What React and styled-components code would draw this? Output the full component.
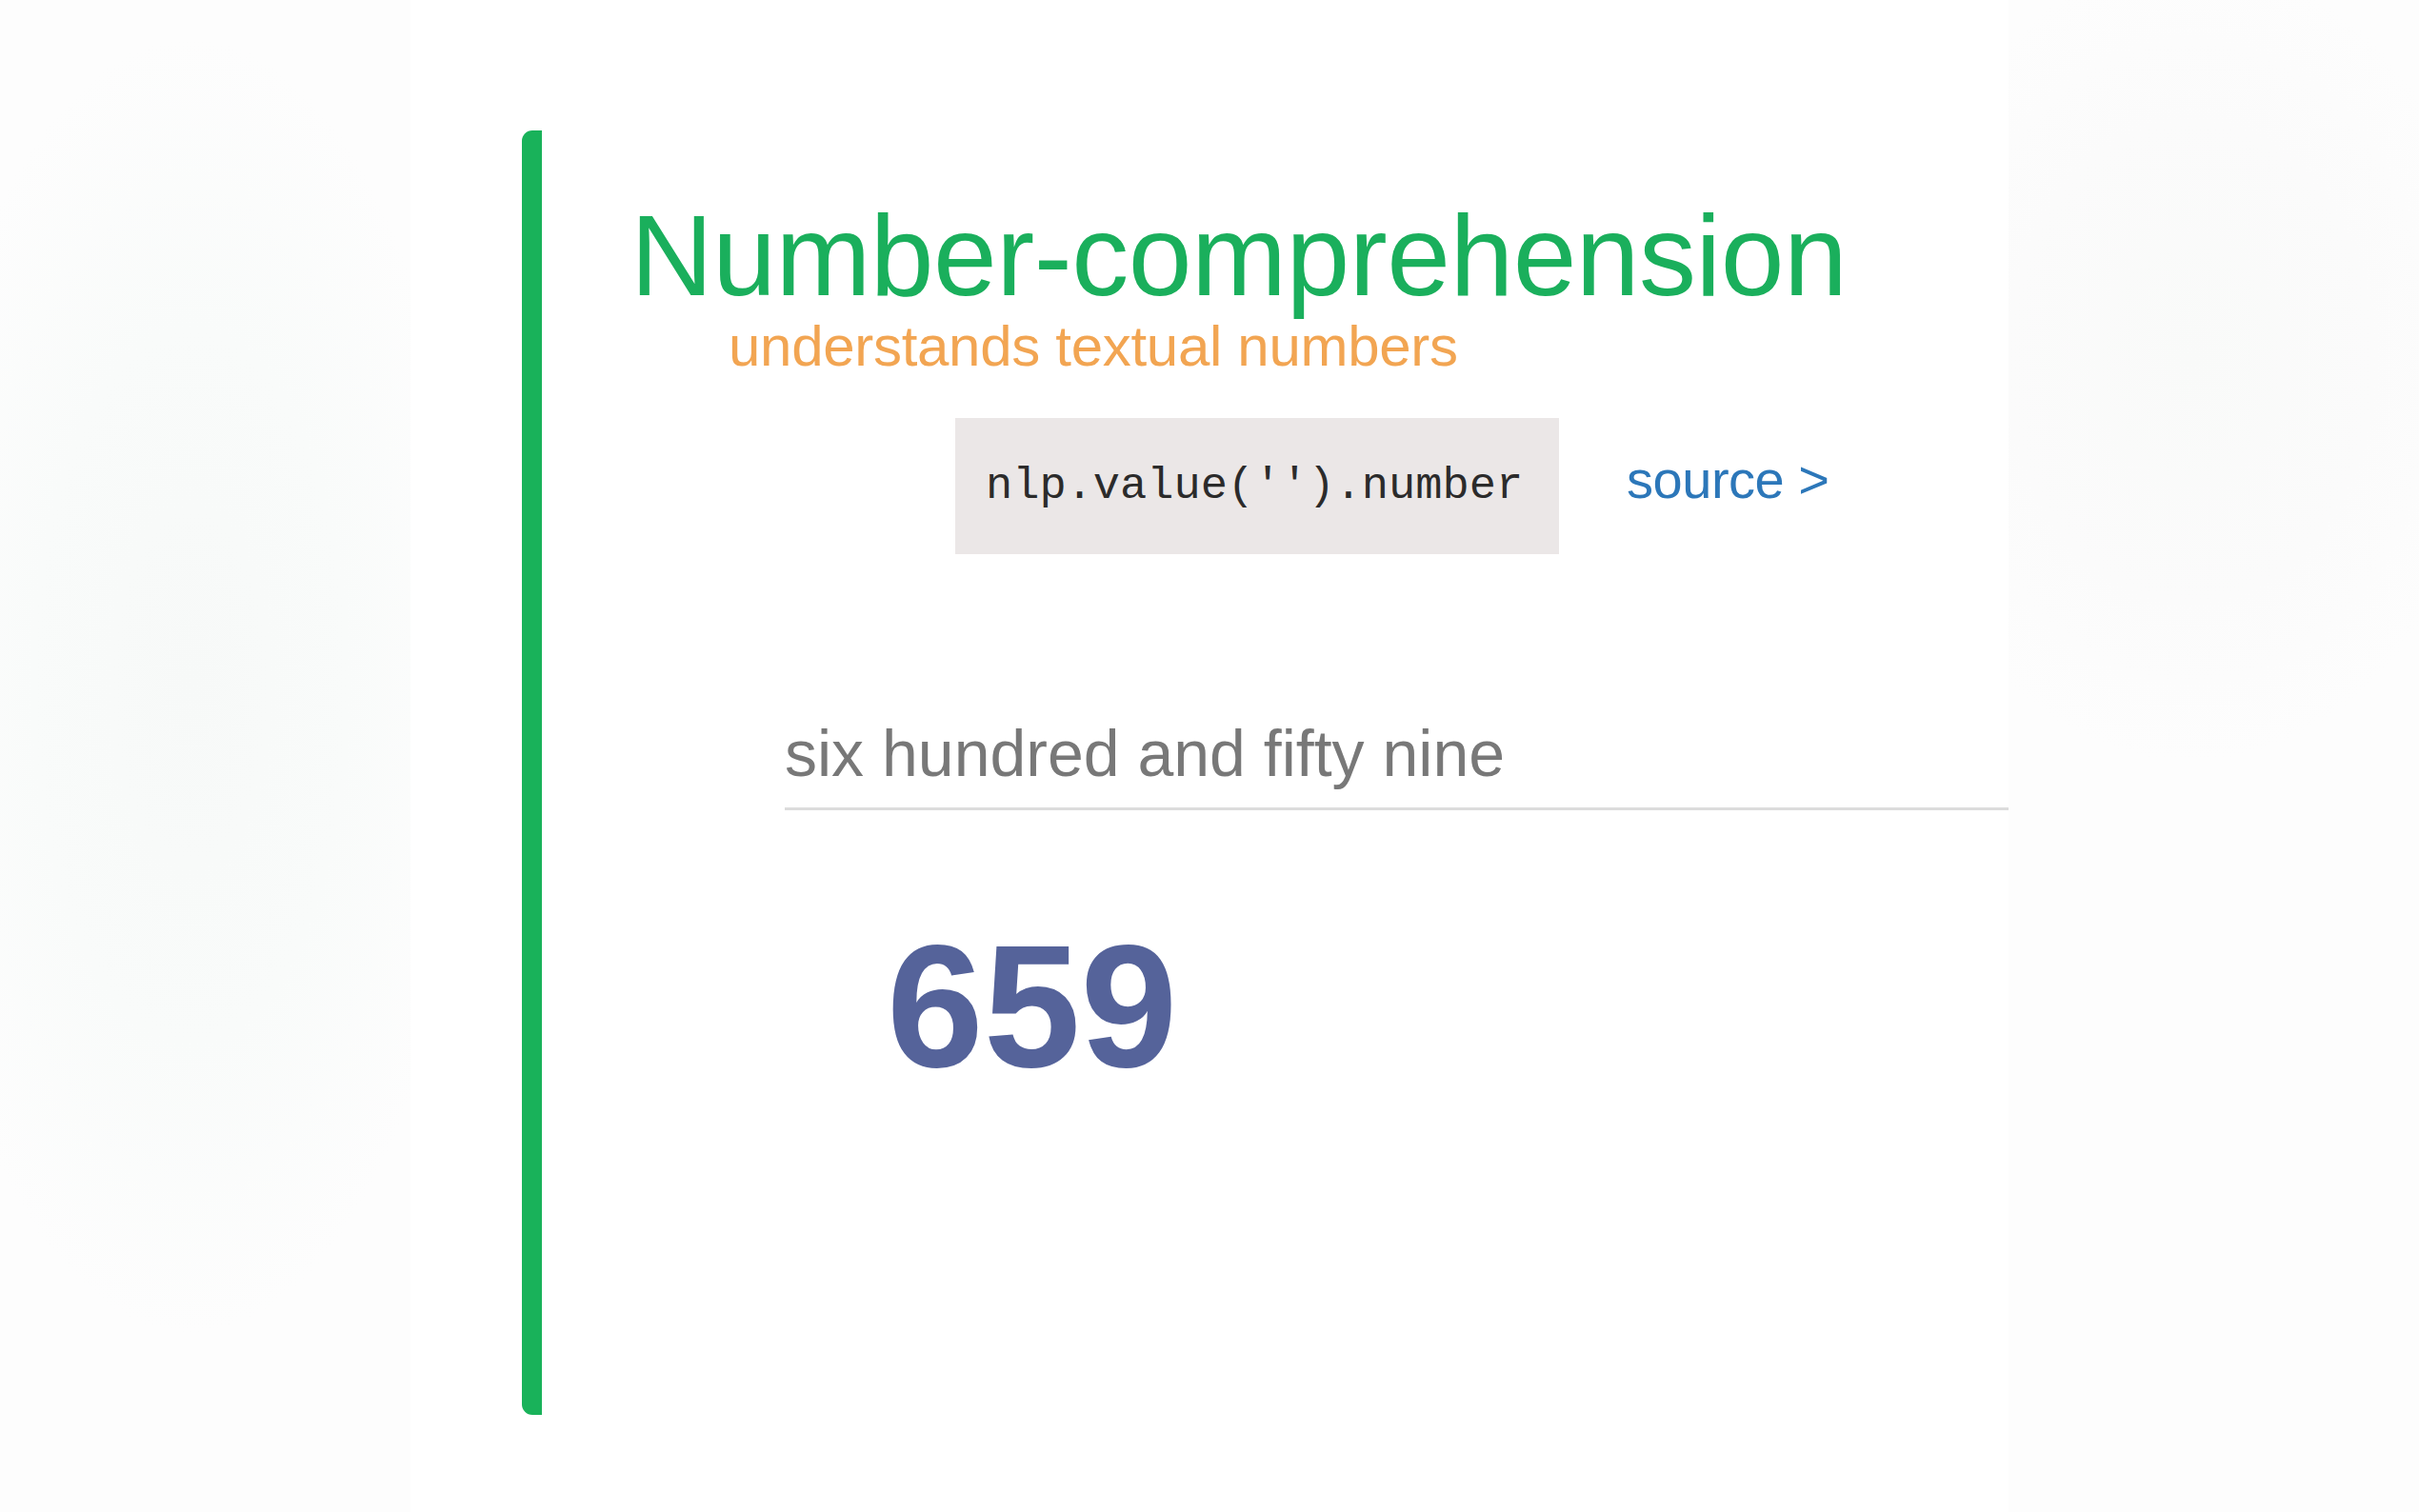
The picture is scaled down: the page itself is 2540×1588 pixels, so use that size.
import React, {useState} from 'react';
import styled, {createGlobalStyle} from 'styled-components';

const GlobalStyle = createGlobalStyle`
	html, body {
		margin: 0;
		padding: 0;
	}
	body {
		min-height: 1588px;
		font-family: "Liberation Sans", Arial, Helvetica, sans-serif;
		background:
			radial-gradient(ellipse 300px 680px at 200px 720px, #f7f9f8 0%, #f9fbfa 55%, rgba(255,255,255,0) 100%),
			radial-gradient(ellipse 320px 420px at 2300px 380px, #f9faf9 0%, #fbfbfb 60%, rgba(255,255,255,0) 100%),
			#fdfdfd;
	}
`

function App() {
	const [text, setText] = useState('six hundred and fifty nine');

	return (
		<Page>
			<GlobalStyle />
			<Card>
				<Demo>
					<Title>Number-comprehension</Title>
					<Subtitle>understands textual numbers</Subtitle>
					<CodeRow>
						<Code>nlp.value('').number</Code>
						<Source href="#">source &gt;</Source>
					</CodeRow>
					<Input value={text} onChange={e => setText(e.target.value)} />
					<Result>659</Result>
				</Demo>
			</Card>
		</Page>
	)
}

export default App

const Page = styled.div`
	display: flex;
	justify-content: center;
	min-height: 1588px;
`

const Card = styled.div`
	width: 1678px;
	background: #fff;
	padding-top: 137px;
	padding-left: 117px;
	box-sizing: border-box;
`

const Demo = styled.section`
	height: 1349px;
	box-sizing: border-box;
	border-left: 21px solid #19b25a;
	border-radius: 11px 0 0 11px;
	padding-top: 73px;
	display: flex;
	flex-direction: column;
	align-items: flex-start;
`

const Title = styled.h1`
	margin: 0 0 0 93px;
	font-size: 120px;
	line-height: 116px;
	font-weight: 400;
	letter-spacing: -0.5px;
	color: #1aaf5c;
`

const Subtitle = styled.div`
	margin: 8px 0 0 196px;
	font-size: 60px;
	line-height: 60px;
	letter-spacing: -0.3px;
	color: #f2a552;
`

const CodeRow = styled.div`
	display: flex;
	align-items: baseline;
	gap: 71px;
	margin: 45px 0 0 434px;
`

const Code = styled.code`
	display: flex;
	align-items: center;
	height: 143px;
	padding: 0 38px 0 32px;
	background: #ebe7e7;
	font-family: "Liberation Mono", "Courier New", monospace;
	font-size: 47px;
	line-height: 47px;
	color: #2b2b2b;
`

const Source = styled.a`
	font-size: 56px;
	line-height: 56px;
	color: #2c77b9;
	text-decoration: none;
	letter-spacing: -0.5px;
`

const Input = styled.input`
	align-self: stretch;
	margin: 175px 0 0 255px;
	height: 68px;
	padding: 0 0 23px 0;
	box-sizing: content-box;
	border: none;
	border-bottom: 3px solid #dcdcdc;
	outline: none;
	background: transparent;
	font-family: "Liberation Sans", Arial, sans-serif;
	font-size: 68px;
	line-height: 68px;
	color: #787878;
`

const Result = styled.div`
	margin: 114px 0 0 362px;
	font-size: 183px;
	line-height: 183px;
	font-weight: 700;
	color: #55639a;
`
